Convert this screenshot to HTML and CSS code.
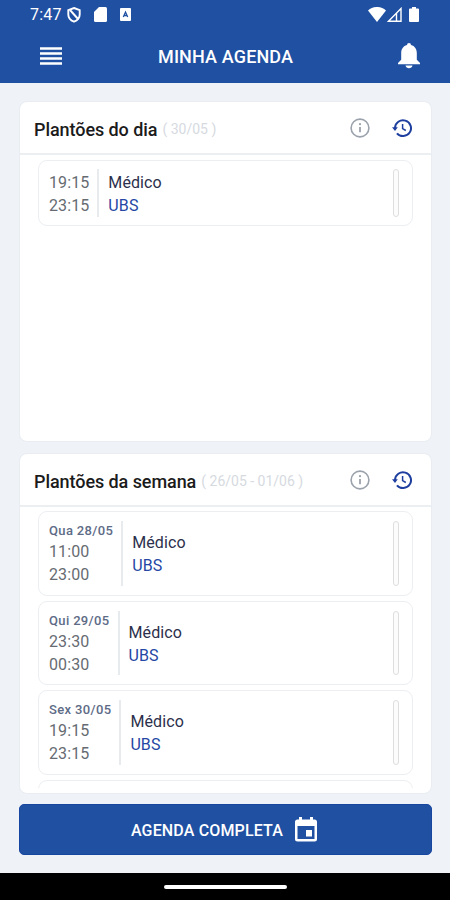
FILE: index.html
```html
<!DOCTYPE html>
<html lang="pt-BR">
<head>
<meta charset="utf-8">
<title>Minha Agenda</title>
<link rel="stylesheet" href="styles.css">
</head>
<body>
<svg width="0" height="0" class="defs">
  <symbol id="info" viewBox="0 0 20 20"><circle cx="10" cy="10" r="8.9" fill="none" stroke="currentColor" stroke-width="1.6"/><path d="M10 9v5.2" stroke="currentColor" stroke-width="1.8"/><circle cx="10" cy="6.2" r="1.1" fill="currentColor"/></symbol>
  <symbol id="history" viewBox="0 0 20 20"><path d="M3 10a8 7.900 0 1 1 1.900 5.300M6.200 16.600a8 7.900 0 0 0 3 1.200" fill="none" stroke="currentColor" stroke-width="2"/><path d="M0 9.300h5.800L3 13z" fill="currentColor"/><path d="M10.600 6v4.600l3.200 1.900" fill="none" stroke="currentColor" stroke-width="1.500"/></symbol>
</svg>
<div class="app">
  <header class="top">
    <div class="status">
      <span class="clock">7:47</span>
      <svg class="shield" width="14" height="16" viewBox="0 0 14 16"><path d="M7 1l5.700 2.200v4.300c0 3.200-2.200 5.800-5.700 7.200-3.500-1.400-5.700-4-5.700-7.200V3.200z" fill="none" stroke="#fff" stroke-width="1.900"/><path d="M3 3l8.500 9.500" stroke="#fff" stroke-width="1.900"/></svg>
      <svg class="sd" width="13" height="15" viewBox="0 0 13 15"><path d="M5 0h6.500a1.500 1.500 0 0 1 1.500 1.500v12a1.500 1.500 0 0 1-1.500 1.500h-10A1.500 1.500 0 0 1 0 13.500V5z" fill="#fff"/></svg>
      <svg class="lang" width="11" height="13" viewBox="0 0 11 13"><rect width="11" height="13" rx="1" fill="#fff"/><path d="M3.300 9L5.500 4 7.700 9M4 7.500h3" fill="none" stroke="#1f50a2" stroke-width="1.300"/></svg>
      <svg class="wifi" width="18" height="15" viewBox="0 0 18 15"><path d="M0 3.500C5-1.200 13-1.200 18 3.500L9 15z" fill="#fff"/></svg>
      <svg class="signal" width="15" height="15" viewBox="0 0 15 15"><path d="M1.500 14.200L14 1.500v12.700zM9.500 14V6.500" fill="none" stroke="#fff" stroke-width="1.400"/></svg>
      <svg class="battery" width="10" height="15" viewBox="0 0 10 15"><path d="M3 0h4v1.500h2a1 1 0 0 1 1 1V14a1 1 0 0 1-1 1H1a1 1 0 0 1-1-1V2.500a1 1 0 0 1 1-1h2z" fill="#fff"/></svg>
    </div>
    <div class="bar">
      <svg class="menu" width="22" height="18" viewBox="0 0 22 18"><path d="M0 1.500h22M0 6.500h22M0 11.500h22M0 16.500h22" stroke="#fff" stroke-width="2.400"/></svg>
      <h1>MINHA AGENDA</h1>
      <svg class="bell" width="22" height="26" viewBox="0 0 22 26"><path d="M11 0a2 2 0 0 1 2 2c3.800 1 5.800 4 5.800 8v6.800L22 20v1.300H0V20l3.200-3.200V10C3.200 6 5.200 3 9 2a2 2 0 0 1 2-2zM7.500 22.500h7c-.4 1.700-1.800 2.700-3.500 2.700s-3.100-1-3.500-2.700z" fill="#fff"/></svg>
    </div>
  </header>
  <main>
    <section class="card">
      <div class="head"><h2>Plantões do dia</h2><span class="range">( 30/05 )</span><svg class="info"><use href="#info"/></svg><svg class="history"><use href="#history"/></svg></div>
      <div class="list">
        <article class="shift"><div class="when"><p>19:15</p><p>23:15</p></div><div class="what"><p>Médico</p><p class="place">UBS</p></div><i class="tag"></i></article>
      </div>
    </section>
    <section class="card week">
      <div class="head"><h2>Plantões da semana</h2><span class="range">( 26/05 - 01/06 )</span><svg class="info"><use href="#info"/></svg><svg class="history"><use href="#history"/></svg></div>
      <div class="list">
        <article class="shift tall"><div class="when"><p class="date">Qua 28/05</p><p>11:00</p><p>23:00</p></div><div class="what"><p>Médico</p><p class="place">UBS</p></div><i class="tag"></i></article>
        <article class="shift tall"><div class="when"><p class="date">Qui 29/05</p><p>23:30</p><p>00:30</p></div><div class="what"><p>Médico</p><p class="place">UBS</p></div><i class="tag"></i></article>
        <article class="shift tall"><div class="when"><p class="date">Sex 30/05</p><p>19:15</p><p>23:15</p></div><div class="what"><p>Médico</p><p class="place">UBS</p></div><i class="tag"></i></article>
        <article class="shift tall"></article>
      </div>
    </section>
    <button class="full">AGENDA COMPLETA
      <svg width="22" height="25" viewBox="0 0 22 25"><path fill-rule="evenodd" d="M4 0h3v2.500h8V0h3v2.500h1.500A2.500 2.500 0 0 1 22 5v17a2.500 2.500 0 0 1-2.500 2.500h-17A2.500 2.500 0 0 1 0 22V5a2.500 2.500 0 0 1 2.500-2.500H4zM2.500 9v13h17V9zM11 13h6v6.500h-6z" fill="#fff"/></svg>
    </button>
  </main>
  <footer><span></span></footer>
</div>
</body>
</html>
```
FILE: styles.css
```css
* { box-sizing: border-box; margin: 0; padding: 0; }
body { font-family: Roboto, sans-serif; background: #eff3f8; }
.defs { display: block; height: 0; }
.app { width: 450px; height: 900px; display: flex; flex-direction: column; overflow: hidden; }
svg { flex: none; }

.top { height: 83px; background: #1f50a2; color: #fff; flex: none; }
.status { height: 29px; padding: 0 31px 0 30px; display: flex; align-items: center; }
.clock { font-size: 16px; width: 37px; letter-spacing: .2px; }
.shield { margin-right: 13px; }
.sd { margin-right: 13px; }
.wifi { margin-left: auto; margin-right: 1px; }
.signal { margin-right: 7px; }
.bar { height: 54px; padding: 0 30px 0 40px; display: flex; align-items: center; }
.menu { margin-top: -1px; }
h1 { font-size: 18px; font-weight: 500; line-height: 24px; letter-spacing: .14px; margin: 2px 0 0 96px; }
.bell { margin: -1px 0 0 auto; }

main { flex: none; height: 790px; padding: 18px 18px 0 19px; display: flex; flex-direction: column; }
.card { height: 341px; margin-bottom: 11px; background: #fff; border: 1px solid #e9edf1; border-radius: 8px; display: flex; flex-direction: column; flex: none; }
.week { margin-bottom: 10px; }
.head { height: 53px; flex: none; display: flex; align-items: center; padding: 1px 19px 0 14px; border-bottom: 2px solid #eceff2; }
h2 { font-size: 18px; font-weight: 500; letter-spacing: -.07px; line-height: 22px; margin-top: 3px; color: #1b1b1b; white-space: nowrap; }
.range { margin-left: 5px; margin-top: 1px; font-size: 14px; color: #d6dadf; white-space: nowrap; }
.info { width: 20px; height: 20px; margin-left: auto; color: #9ba2ac; }
.history { width: 20px; height: 20px; margin: 0 0 0 22px; color: #1f3fa0; }
.head .info { margin-right: 0; }
.list { flex: 1; margin: 5px 18px; display: flex; flex-direction: column; gap: 5px; overflow: hidden; }
.week .list { margin-top: 4px; }
.shift { height: 66px; flex: none; display: flex; align-items: stretch; border: 1.500px solid #eceef1; border-radius: 9px; padding: 8px 13px 8px 10px; }
.tall { height: 84.500px; padding-top: 9px; padding-bottom: 9px; }
.when { border-right: 2px solid #e8ebee; padding: 2px 8px 0 0; display: flex; flex-direction: column; justify-content: center; }
.shift p { font-size: 16px; line-height: 23px; letter-spacing: .1px; color: #666b72; white-space: nowrap; }
.shift .date { font-size: 13px; line-height: 18px; font-weight: 500; letter-spacing: .35px; color: #5d6b86; }
.what { margin-left: 9px; padding-top: 2px; display: flex; flex-direction: column; justify-content: center; }
.shift .what p { color: #2c304c; }
.shift .what .place { color: #2447a5; }
.tag { width: 6px; margin-left: auto; border: 1px solid #dedede; border-radius: 3px; background: #fcfcfc; }

.full { height: 51px; flex: none; border: 1px solid #1746a0; border-radius: 5px; background: #1f50a2; color: #fff; font: 500 16px Roboto, sans-serif; letter-spacing: .15px; display: flex; align-items: center; justify-content: center; gap: 12px; padding: 1px 3px 0 0; }
.full svg { margin-top: -2px; }
footer { height: 27px; background: #000; display: flex; justify-content: center; align-items: center; }
footer span { width: 123px; height: 4px; border-radius: 2px; background: #fff; }
```
